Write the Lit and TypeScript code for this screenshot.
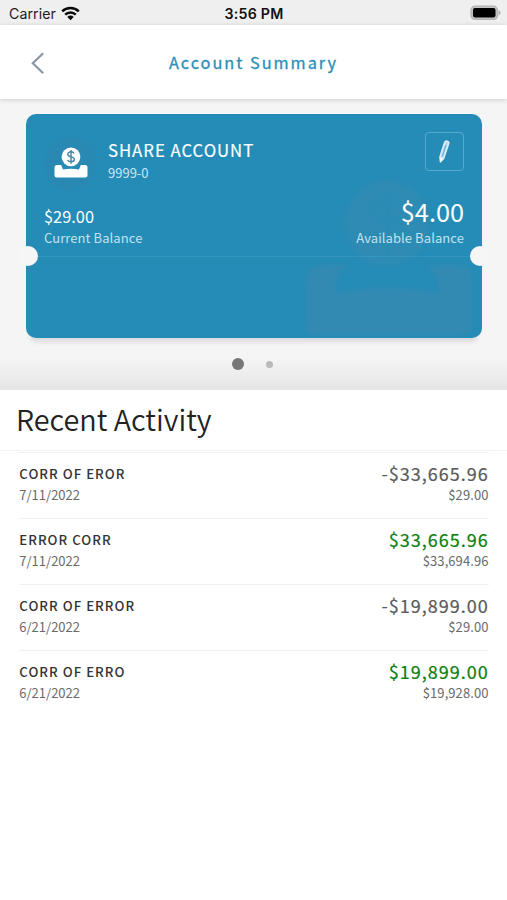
import { LitElement, html, css, svg } from "lit";
import { customElement, property } from "lit/decorators.js";
import { classMap } from "lit/directives/class-map.js";

interface Activity {
  title: string;
  date: string;
  amount: string;
  balance: string;
}

const ACTIVITY: Activity[] = [
  { title: "CORR OF EROR", date: "7/11/2022", amount: "-$33,665.96", balance: "$29.00" },
  { title: "ERROR CORR", date: "7/11/2022", amount: "$33,665.96", balance: "$33,694.96" },
  { title: "CORR OF ERROR", date: "6/21/2022", amount: "-$19,899.00", balance: "$29.00" },
  { title: "CORR OF ERRO", date: "6/21/2022", amount: "$19,899.00", balance: "$19,928.00" },
];

const DOLLAR = svg`<path d="M21.2 7.9C20.4 6.600 19 6 17.400 6c-2.300 0-3.900 1.100-3.900 2.900 0 4.200 7.900 2 7.900 6.100 0 1.900-1.700 3-4 3-2 0-3.500-.8-4.200-2.200M17.400 3.800v16.400" fill="none" stroke-width="1.700"/>`;

@customElement("status-bar")
class StatusBar extends LitElement {
  static styles = css`
    :host {
      display: grid;
      grid-template-columns: 1fr auto 1fr;
      align-items: center;
      height: 25px;
      padding: 2px 6px 0 9px;
      box-sizing: border-box;
      background: #efefef;
      color: #1c1c1c;
      font: 14.2px/20px Inter, "Liberation Sans", sans-serif;
    }
    .carrier { display: flex; align-items: center; gap: 5.500px; letter-spacing: 0.050px; }
    .time { font-weight: 600; letter-spacing: 0.250px; color: #111; margin-right: 2px; }
    .battery { justify-self: end; display: block; margin-top: -1px; }
    .wifi { margin-top: -1px; }
  `;
  render() {
    return html`
      <span class="carrier">Carrier
        <svg class="wifi" width="19" height="15" viewBox="0 0 19 15">
          <g fill="none" stroke="#0a0a0a" stroke-width="2.500">
            <path d="M1.200 5.400a11.800 11.800 0 0 1 16.600 0"/>
            <path d="M4.200 8.600a7.500 7.500 0 0 1 10.600 0"/>
          </g>
          <path d="M6.300 10.900a4.500 4.500 0 0 1 6.400 0L9.500 14.200z" fill="#0a0a0a"/>
        </svg>
      </span>
      <span class="time">3:56 PM</span>
      <svg class="battery" width="31" height="16" viewBox="0 0 31 16">
        <rect x="1" y="1.200" width="26.500" height="13.200" rx="4" fill="#c4c4c4" stroke="#b2b2b2" stroke-width="1.300"/>
        <rect x="3" y="3" width="22.500" height="9.600" rx="2" fill="#000"/>
        <path d="M28.600 5.300c1.300.5 1.900 1.400 1.900 2.500s-.6 2-1.900 2.500z" fill="#a9a9a9"/>
      </svg>
    `;
  }
}

@customElement("nav-header")
class NavHeader extends LitElement {
  static styles = css`
    :host {
      display: grid;
      grid-template-columns: 60px 1fr 60px;
      align-items: center;
      height: 73.500px;
      background: #fff;
      box-shadow: 0 1px 5px rgba(0, 0, 0, 0.16);
      position: relative;
      z-index: 1;
    }
    .back { display: block; margin: 2px 0 0 30px; }
    .title {
      text-align: center;
      color: #2b8fb8;
      font-size: 16.300px;
      line-height: 24px;
      font-weight: 400;
      letter-spacing: 1.980px;
      -webkit-text-stroke: 0.300px;
    }
  `;
  render() {
    return html`
      <svg class="back" width="16" height="24" viewBox="0 0 16 24">
        <path d="M13.200 2.200 2.800 12.300l10.400 9.900" fill="none" stroke="#8b97a6" stroke-width="2.200"/>
      </svg>
      <span class="title">Account Summary</span>
    `;
  }
}

@customElement("account-card")
class AccountCard extends LitElement {
  static styles = css`
    :host {
      display: block;
      position: relative;
      height: 224px;
      box-sizing: border-box;
      padding: 18px 18px 0;
      border-radius: 10px;
      background: #248cb7;
      color: #fff;
      box-shadow: 0 8px 5px -4px rgba(0, 0, 0, 0.1);
    }
    .top { display: flex; height: 72px; }
    .badge {
      width: 53px;
      height: 53px;
      margin-top: 5px;
      border-radius: 50%;
      background: rgba(80, 120, 150, 0.14);
    }
    .badge svg { display: block; }
    .name { flex: 1; padding: 5px 0 0 11px; }
    .name h2 {
      margin: 0;
      font-size: 16.800px;
      line-height: 26px;
      font-weight: 400;
      letter-spacing: 0.950px;
      -webkit-text-stroke: 0.150px;
    }
    .number { font-size: 13px; line-height: 20px; color: #c9e5f3; }
    .edit {
      width: 37px;
      height: 37px;
      border: 1px solid #57a8cc;
      border-radius: 4px;
    }
    .edit svg { display: block; }
    .balances { display: flex; justify-content: space-between; align-items: flex-end; height: 44px; }
    .value { font-size: 16.400px; line-height: 23px; }
    .large { font-size: 25.300px; line-height: 33px; }
    .label { font-size: 13px; line-height: 20px; color: #c3e2f0; letter-spacing: 0.080px; }
    .right { text-align: right; }
    .balances, .top { position: relative; }
    .rule {
      height: 1px;
      margin: 8px -6px 0;
      background: #3495bf;
      position: relative;
    }
    .notch {
      position: absolute;
      top: 132px;
      width: 20px;
      height: 20px;
      border-radius: 50%;
      background: #f6f6f6;
    }
    .start { left: -8px; }
    .end { right: -8px; }
    .mark { position: absolute; right: 0; bottom: 0; opacity: 0.38; filter: blur(2px); }
  `;
  render() {
    return html`
      <svg class="mark" width="186" height="164" viewBox="0 0 186 164">
        <circle cx="91" cy="49" r="43" fill="#4a88ab" opacity=".75"/>
        <path d="M108 31c-8-10-31-9-31 4 0 16 32 8 32 24 0 13-26 13-33 2M92 15v66" fill="none" stroke="#248cb7" stroke-width="4" opacity=".4"/>
        <path d="M24 91h30q-11 5-14 15v13q51-10 102 0v-13q-4-10-14-15h33q15 0 15 15v48q0 7-8 7H18q-8 0-8-7v-48q0-12 14-15z" fill="#4a88ab"/>
      </svg>
      <span class="notch start"></span>
      <span class="notch end"></span>
      <div class="top">
        <div class="badge">
          <svg width="53" height="53" viewBox="0 0 53 53">
            <rect x="10.500" y="28" width="33" height="12.500" rx="2.500" fill="#fff"/>
            <path d="M17 27.500h20l-2 5q-8-1.500-16 0z" fill="#248cb7"/>
            <circle cx="27" cy="19.800" r="9.400" fill="#fff"/>
            <g stroke="#4385a4" transform="translate(12.500 9.800) scale(.835)">${DOLLAR}</g>
          </svg>
        </div>
        <div class="name">
          <h2>SHARE ACCOUNT</h2>
          <div class="number">9999-0</div>
        </div>
        <div class="edit">
          <svg width="37" height="37" viewBox="0 0 37 37">
            <path d="M18.600 9.500q.8-1.900 2.700-1.200 1.900.6 1.300 2.500L17.600 25.500l-3.100 3.300-.5-4.700z" fill="#b5dbef" stroke="#d9eefa" stroke-width="1.600" stroke-linejoin="round"/>
            <path d="M19.900 12.200l-3.500 10.900" stroke="#6fb3d5" stroke-width="1.300"/>
            <path d="M14 24.500l3.200 1-2.600 3.200z" fill="#fff"/>
          </svg>
        </div>
      </div>
      <div class="balances">
        <div>
          <div class="value">$29.00</div>
          <div class="label">Current Balance</div>
        </div>
        <div class="right">
          <div class="value large">$4.00</div>
          <div class="label">Available Balance</div>
        </div>
      </div>
      <div class="rule"></div>
    `;
  }
}

@customElement("activity-row")
class ActivityRow extends LitElement {
  @property({ attribute: false }) item!: Activity;
  static styles = css`
    :host {
      display: flex;
      justify-content: space-between;
      height: 66px;
      box-sizing: border-box;
      border-top: 1px solid #f1f1f1;
      padding-top: 10px;
    }
    .title { font-size: 13.200px; line-height: 22px; font-weight: 500; letter-spacing: 1.030px; color: #333; }
    .small { font-size: 13px; line-height: 20px; color: #6a6a6a; }
    .amounts { text-align: right; margin-top: -1px; }
    .amount { font-size: 18px; line-height: 23px; letter-spacing: 1px; margin-right: -0.200px; color: #5a5a5a; -webkit-text-stroke: 0.200px; }
    .credit { color: #0a800d; }
    .amounts .small { letter-spacing: 0.080px; }
  `;
  render() {
    const credit = !this.item.amount.startsWith("-");
    return html`
      <div>
        <div class="title">${this.item.title}</div>
        <div class="small">${this.item.date}</div>
      </div>
      <div class="amounts">
        <div class=${classMap({ amount: true, credit })}>${this.item.amount}</div>
        <div class="small">${this.item.balance}</div>
      </div>
    `;
  }
}

@customElement("app-root")
class AppRoot extends LitElement {
  static styles = css`
    :host {
      display: block;
      height: 900px;
      overflow: hidden;
      background: #fff;
      font-family: "Noto Sans CJK SC", "Noto Sans", sans-serif;
    }
    .carousel {
      height: 291.500px;
      box-sizing: border-box;
      padding: 15px 25px 0 26px;
      background: linear-gradient(#f5f5f5 0, #f5f5f5 258px, #e6e6e6 100%);
    }
    .dots { display: flex; align-items: center; gap: 22px; height: 13px; margin: 20px 0 0 205.500px; }
    .dot { width: 7px; height: 7px; border-radius: 50%; background: #b9b9b9; }
    .active { width: 12.500px; height: 12.500px; background: #777; }
    h1 {
      margin: 0;
      height: 61px;
      box-sizing: border-box;
      padding: 8px 16px 0;
      border-bottom: 1px solid #f3f3f3;
      font-size: 28.800px;
      line-height: 42px;
      font-weight: 350;
      color: #222;
    }
    .list { display: block; margin: 1px 18.500px 0 19.300px; }
  `;
  render() {
    return html`
      <status-bar></status-bar>
      <nav-header></nav-header>
      <section class="carousel">
        <account-card></account-card>
        <div class="dots"><span class="dot active"></span><span class="dot"></span></div>
      </section>
      <h1>Recent Activity</h1>
      <div class="list">
        ${ACTIVITY.map((item) => html`<activity-row .item=${item}></activity-row>`)}
      </div>
    `;
  }
}
